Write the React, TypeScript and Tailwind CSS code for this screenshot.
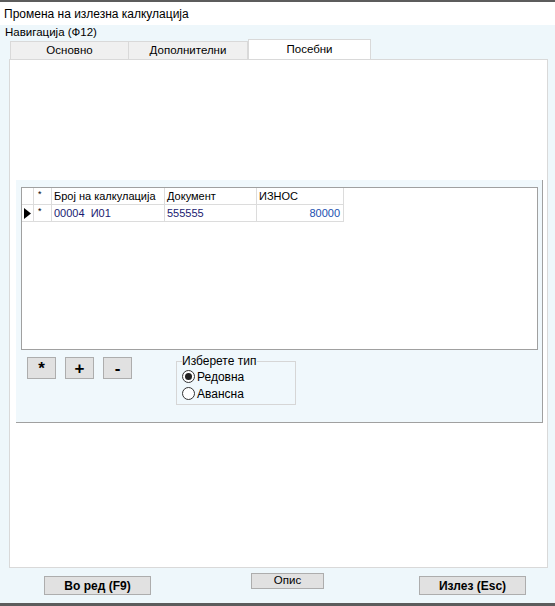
import React from 'react'

const font = { fontFamily: '"Liberation Sans", Arial, sans-serif' }

function Radio({ label, checked }: { label: string; checked?: boolean }) {
  return (
    <div className="flex items-center h-[17px] gap-[2px]">
      <span className="w-[13px] h-[13px] rounded-full border border-[#333] bg-white flex items-center justify-center">
        {checked && <span className="w-[7px] h-[7px] rounded-full bg-[#222]" />}
      </span>
      <span className="text-[12px] text-black">{label}</span>
    </div>
  )
}

function SmallButton({ label }: { label: string }) {
  return (
    <button className="w-[29px] h-[22px] bg-[#e1e1e1] border border-[#adadad] text-[17px] font-bold leading-none text-black flex items-center justify-center">
      {label}
    </button>
  )
}

export default function App() {
  return (
    <div className="w-[555px] h-[606px] flex flex-col bg-[#eef7fb] overflow-hidden" style={font}>
      <div className="h-[2px] bg-[#5c5c5c]" />
      <div className="h-[23px] bg-white px-[4px] flex items-center text-[12px] text-black">
        Промена на излезна калкулација
      </div>

      <div className="flex-1 flex flex-col">
        <div className="h-[14px] pl-[5px] text-[11.5px] leading-[14px] text-black">Навигација (Ф12)</div>

        {/* tabs */}
        <div className="flex items-end h-[20px] pl-[10px]">
          <div className="w-[119px] h-[18px] bg-[#f0f0f0] border border-[#d9d9d9] border-b-0 text-[11.5px] flex items-center justify-center text-black">
            Основно
          </div>
          <div className="w-[119px] h-[18px] bg-[#f0f0f0] border border-[#d9d9d9] border-l-0 border-b-0 text-[11.5px] flex items-center justify-center text-black">
            Дополнителни
          </div>
          <div className="w-[123px] h-[20px] bg-white border border-[#d9d9d9] border-b-0 text-[11.5px] flex items-center justify-center text-black">
            Посебни
          </div>
        </div>

        {/* tab page */}
        <div className="ml-[9px] w-[539px] h-[509px] bg-white border border-[#d9d9d9] flex flex-col">
          <div className="h-[120px]" />
          <div className="ml-[6px] w-[527px] h-[243px] bg-[#f0f8fc] border-r border-b border-[#a0a0a0] flex flex-col">
            {/* grid */}
            <div className="ml-[5px] mt-[7px] w-[517px] h-[163px] bg-white border border-[#a0a0a0]">
              <div className="flex h-[17px] text-[11px] text-black">
                <div className="w-[12px] border-r border-b border-[#dcdcdc]" />
                <div className="w-[18px] border-r border-b border-[#dcdcdc] pl-[4px] text-[9px] leading-[12px]">*</div>
                <div className="w-[113px] border-r border-b border-[#dcdcdc] pl-[2px] leading-[16px]">Број на калкулација</div>
                <div className="w-[92px] border-r border-b border-[#dcdcdc] pl-[2px] leading-[16px]">Документ</div>
                <div className="w-[87px] border-r border-b border-[#dcdcdc] pl-[2px] leading-[16px]">ИЗНОС</div>
              </div>
              <div className="flex h-[17px] text-[11px]">
                <div className="w-[12px] border-r border-b border-[#dcdcdc] flex items-center pl-[2px]">
                  <svg width="7" height="11" viewBox="0 0 7 11">
                    <path d="M0 0 L7 5.5 L0 11 Z" fill="#000" />
                  </svg>
                </div>
                <div className="w-[18px] border-r border-b border-[#dcdcdc] pl-[4px] text-[9px] leading-[12px] text-black">*</div>
                <div className="w-[113px] border-r border-b border-[#dcdcdc] pl-[2px] leading-[16px] text-[#1a1a70]">00004&nbsp;&nbsp;И01</div>
                <div className="w-[92px] border-r border-b border-[#dcdcdc] pl-[2px] leading-[16px] text-[#1a1a70]">555555</div>
                <div className="w-[87px] border-r border-b border-[#dcdcdc] pr-[3px] leading-[16px] text-right text-[#1a4fb0]">80000</div>
              </div>
            </div>

            <div className="flex">
              <div className="flex gap-[9px] ml-[11px] mt-[7px]">
                <SmallButton label="*" />
                <SmallButton label="+" />
                <SmallButton label="-" />
              </div>
              <div className="relative ml-[44px] mt-[11px] w-[120px] h-[44px] border border-[#d6d6d6]">
                <div className="absolute -top-[8px] left-[5px] bg-[#f0f8fc] text-[12px] leading-[14px] text-black pr-[1px]">
                  Изберете тип
                </div>
                <div className="pt-[6px] pl-[5px] flex flex-col">
                  <Radio label="Редовна" checked />
                  <Radio label="Авансна" />
                </div>
              </div>
            </div>
          </div>
        </div>

        {/* bottom buttons */}
        <div className="relative flex-1">
          <button className="absolute left-[44px] top-[8px] w-[107px] h-[19px] bg-[#e1e1e1] border border-[#adadad] text-[12px] font-bold text-black flex items-center justify-center">
            Во ред (F9)
          </button>
          <button className="absolute left-[251px] top-[5px] w-[73px] h-[16px] bg-[#e1e1e1] border border-[#adadad] text-[11.5px] text-black flex items-center justify-center">
            Опис
          </button>
          <button className="absolute left-[419px] top-[8px] w-[107px] h-[19px] bg-[#e1e1e1] border border-[#adadad] text-[12px] font-bold text-black flex items-center justify-center">
            Излез (Esc)
          </button>
        </div>
      </div>
      <div className="h-[3px] bg-[#5c5c5c]" />
    </div>
  )
}
